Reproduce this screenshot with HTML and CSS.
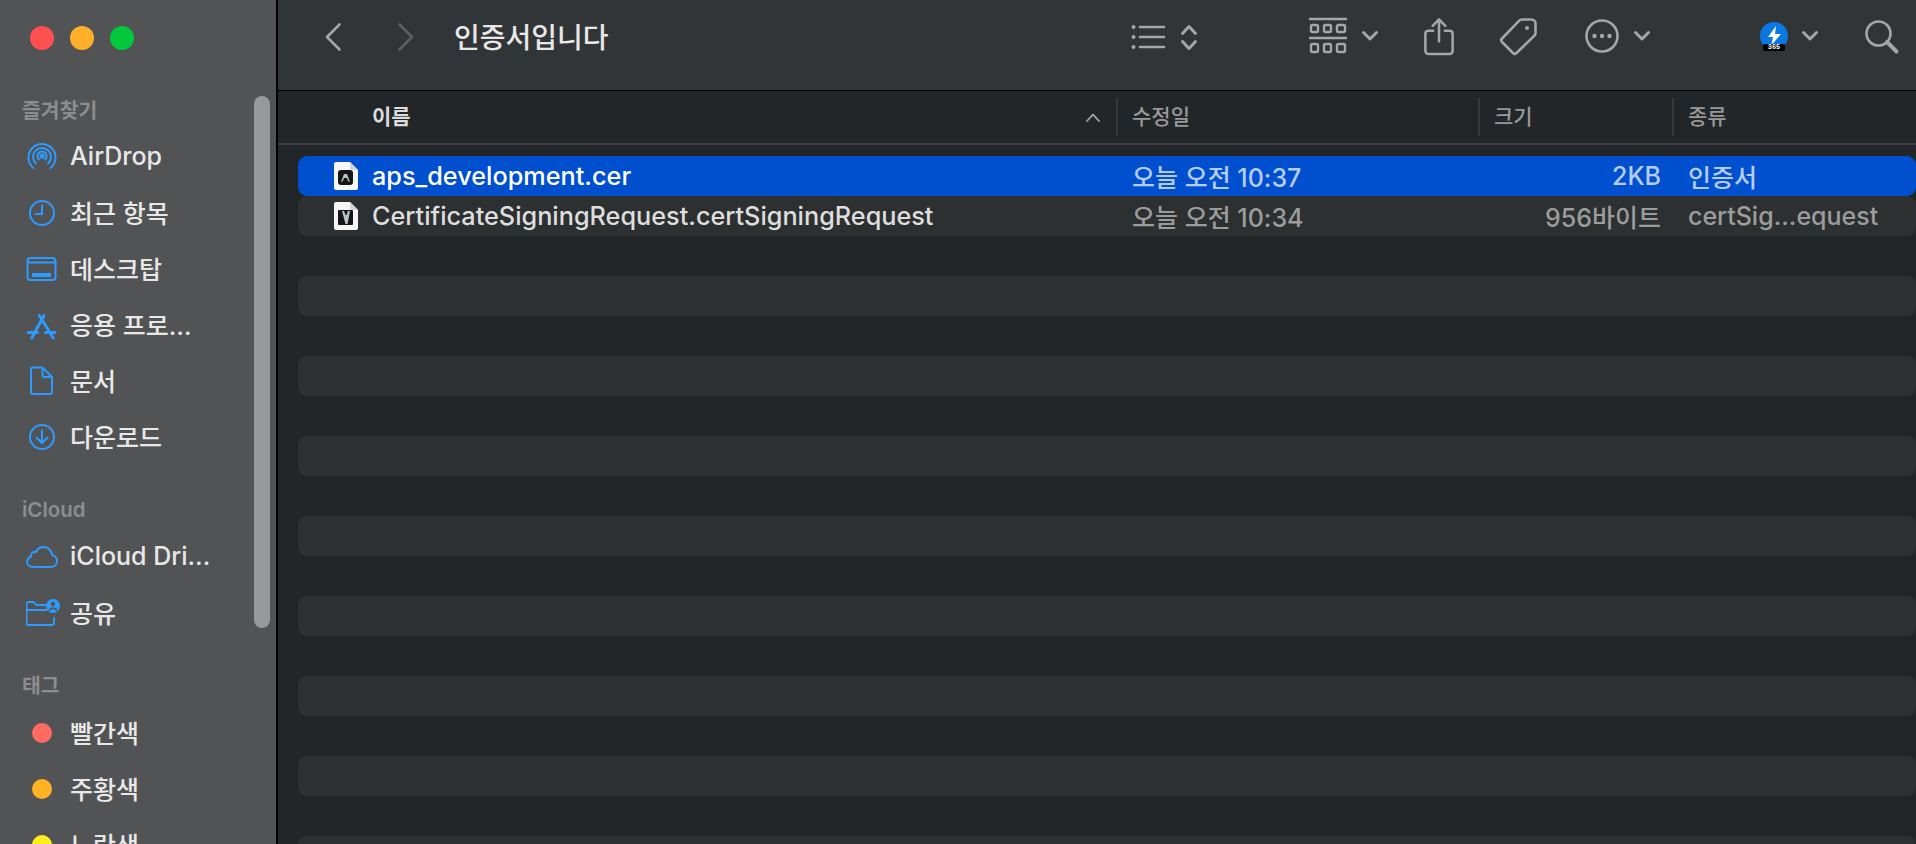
FILE: index.html
```html
<!DOCTYPE html>
<html lang="ko">
<head>
<meta charset="utf-8">
<title>인증서입니다</title>
<link rel="stylesheet" href="styles.css">
</head>
<body>
<div class="window">
  <aside class="sidebar">
    <div class="lights"><span class="light red"></span><span class="light yellow"></span><span class="light green"></span></div>
    <h2 class="section first">즐겨찾기</h2>
    <div class="item"><svg class="sicon" viewBox="0 0 32 32"><path d="M7.500 27a13.500 13.500 0 1 1 17 0M10 22.600a9 9 0 1 1 12 0M13 18.600a4.600 4.600 0 1 1 6 0"/><circle class="fill" cx="16" cy="15" r="1.600"/></svg><span>AirDrop</span></div>
    <div class="item"><svg class="sicon" viewBox="0 0 32 32"><circle cx="16" cy="16" r="12"/><path d="M16 8.500V17H9.500"/></svg><span>최근 항목</span></div>
    <div class="item"><svg class="sicon" viewBox="0 0 32 32"><rect x="1.500" y="5" width="28" height="22" rx="3"/><path d="M1.500 9.500h28"/><rect class="fill nostroke" x="6" y="20" width="19" height="4"/></svg><span>데스크탑</span></div>
    <div class="item"><svg class="sicon" viewBox="0 0 32 32"><path class="thick" d="M13.300 6.500L27.300 29M18 6.500L5.700 29M2.300 23.500h9M19.500 23.500H29"/></svg><span>응용 프로…</span></div>
    <div class="item"><svg class="sicon" viewBox="0 0 32 32"><path d="M7 2.500h9.500L26 12v15a2 2 0 0 1-2 2H7a2 2 0 0 1-2-2V4.500a2 2 0 0 1 2-2zM16.500 2.500V10a2 2 0 0 0 2 2H26"/></svg><span>문서</span></div>
    <div class="item"><svg class="sicon" viewBox="0 0 32 32"><circle cx="16" cy="16" r="12"/><path d="M16 9.500V22M10.500 16.500l5.500 5.500 5.500-5.500"/></svg><span>다운로드</span></div>
    <h2 class="section">iCloud</h2>
    <div class="item"><svg class="sicon" viewBox="0 0 32 32"><path d="M8 26h17a6 6 0 0 0 1.500-11.800C25.500 9 21.500 6 17.500 6c-3.500 0-6 2-7.500 5-1-.4-3-.3-4 1-.9 1.100-1 2.400-1 3.500C3 16.500 1 18.800 1 21c0 3 3 5 7 5z"/></svg><span>iCloud Dri...</span></div>
    <div class="item"><svg class="sicon wide" viewBox="0 0 34 32"><path d="M28 21v5a2 2 0 0 1-2 2H2.500a2 2 0 0 1-2-2V7a2 2 0 0 1 2-2h5l3 3h9M.5 13h20"/><circle class="fill nostroke" cx="27" cy="9" r="7"/><circle class="cut" cx="27" cy="7" r="2.200"/><path class="cutline" d="M23.500 13c1-2.500 6-2.500 7 0"/></svg><span>공유</span></div>
    <h2 class="section">태그</h2>
    <div class="item"><span class="tag tag-red"></span><span>빨간색</span></div>
    <div class="item"><span class="tag tag-orange"></span><span>주황색</span></div>
    <div class="item"><span class="tag tag-yellow"></span><span>노란색</span></div>
    <div class="scrollbar"></div>
  </aside>

  <main class="main">
    <header class="toolbar">
      <svg class="tb nav" viewBox="0 0 16 28"><path d="M14.500 1.500L2 14l12.500 12.500"/></svg>
      <svg class="tb nav forward" viewBox="0 0 16 28"><path d="M1.500 1.500L14 14 1.500 26.500"/></svg>
      <h1 class="title">인증서입니다</h1>
      <svg class="tb list" viewBox="0 0 34 24"><circle class="dot" cx="2.500" cy="2" r="2"/><circle class="dot" cx="2.500" cy="12" r="2"/><circle class="dot" cx="2.500" cy="22" r="2"/><path d="M9 2h24M9 12h24M9 22h24"/></svg>
      <svg class="tb updown" viewBox="0 0 16 27"><path d="M1.500 9.500L8 2.500l6.500 7M1.500 17.500L8 24.500l6.500-7"/></svg>
      <svg class="tb grid" viewBox="0 0 36 36"><path d="M0 1h36M0 20h36"/><rect x="1" y="7" width="7" height="7" rx="1.500"/><rect x="14" y="7" width="7" height="7" rx="1.500"/><rect x="27" y="7" width="8" height="7" rx="1.500"/><rect x="1" y="26" width="7" height="8" rx="1.500"/><rect x="14" y="26" width="7" height="8" rx="1.500"/><rect x="27" y="26" width="8" height="8" rx="1.500"/></svg>
      <svg class="tb chev chev-grid" viewBox="0 0 16 10"><path d="M1.500 1.500L8 8l6.500-6.500"/></svg>
      <svg class="tb share" viewBox="0 0 30 38"><path d="M9 13H4a3 3 0 0 0-3 3v18a3 3 0 0 0 3 3h22a3 3 0 0 0 3-3V16a3 3 0 0 0-3-3h-5M15 24V2M8.500 8L15 1.500 21.500 8"/></svg>
      <svg class="tb tagicon" viewBox="0 0 37 37"><path d="M22 1.500h9.500a4 4 0 0 1 4 4V15a4 4 0 0 1-1.200 2.800L16.500 35a2.500 2.500 0 0 1-3.500 0L2 24a2.500 2.500 0 0 1 0-3.500L19 2.800A4 4 0 0 1 22 1.500z"/><circle class="dot" cx="27" cy="10" r="2"/></svg>
      <svg class="tb more" viewBox="0 0 34 34"><circle cx="17" cy="17" r="15.500"/><circle class="dot" cx="9.500" cy="17" r="2.200"/><circle class="dot" cx="17" cy="17" r="2.200"/><circle class="dot" cx="24.500" cy="17" r="2.200"/></svg>
      <svg class="tb chev chev-more" viewBox="0 0 16 10"><path d="M1.500 1.500L8 8l6.500-6.500"/></svg>
      <div class="amp"><svg class="amp-svg" viewBox="0 0 28 28"><circle class="amp-circle" cx="14" cy="14" r="14"/><path class="amp-bolt" d="M16 4L8 15h5l-1.500 8L21 12h-6z"/></svg><span class="amp-label">365</span></div>
      <svg class="tb chev chev-amp" viewBox="0 0 16 10"><path d="M1.500 1.500L8 8l6.500-6.500"/></svg>
      <svg class="tb search" viewBox="0 0 33 33"><circle cx="13.500" cy="13.500" r="12"/><path class="thick" d="M22 22l9.500 9.500"/></svg>
    </header>

    <div class="colhead">
      <div class="col col-name"><span>이름</span><svg class="sort" viewBox="0 0 14 9"><path d="M1 8l6-6.500L13 8"/></svg></div>
      <div class="col col-other">수정일</div>
      <div class="col col-other">크기</div>
      <div class="col col-other">종류</div>
    </div>

    <div class="rows">
      <div class="row selected">
        <div class="cell-name">
          <svg class="fileicon" viewBox="0 0 24 28"><path class="paper" d="M2 0h14l8 8v18a2 2 0 0 1-2 2H2a2 2 0 0 1-2-2V2a2 2 0 0 1 2-2z"/><path class="fold" d="M16 0v6a2 2 0 0 0 2 2h6z"/><rect class="badge" x="4" y="8" width="15" height="15" rx="3"/><path class="seal" d="M7 20l3-8h3l3 8-2-1-1-3h-3l-1 3z"/></svg>
          <span class="name-text">aps_development.cer</span>
        </div>
        <div class="cell-dim">오늘 오전 10:37</div>
        <div class="cell-dim cell-size">2KB</div>
        <div class="cell-dim cell-kind">인증서</div>
      </div>
      <div class="row alt">
        <div class="cell-name">
          <svg class="fileicon" viewBox="0 0 24 28"><path class="paper" d="M2 0h14l8 8v18a2 2 0 0 1-2 2H2a2 2 0 0 1-2-2V2a2 2 0 0 1 2-2z"/><path class="fold" d="M16 0v6a2 2 0 0 0 2 2h6z"/><rect class="badge" x="4" y="8" width="15" height="15" rx="1"/><path class="seal" d="M8 9h2l1.500 4h1L14 9h2l-2.500 13h-2z"/></svg>
          <span class="name-text name-dim">CertificateSigningRequest.certSigningRequest</span>
        </div>
        <div class="cell-dim">오늘 오전 10:34</div>
        <div class="cell-dim cell-size">956바이트</div>
        <div class="cell-dim cell-kind">certSig...equest</div>
      </div>
      <div class="row"></div><div class="row alt"></div>
      <div class="row"></div><div class="row alt"></div>
      <div class="row"></div><div class="row alt"></div>
      <div class="row"></div><div class="row alt"></div>
      <div class="row"></div><div class="row alt"></div>
      <div class="row"></div><div class="row alt"></div>
      <div class="row"></div><div class="row alt"></div>
      <div class="row"></div><div class="row alt"></div>
    </div>
  </main>
</div>
</body>
</html>
```

FILE: styles.css
```css
* { box-sizing: border-box; }
html, body { margin: 0; height: 100%; overflow: hidden; background: #232628; }
body { font-family: Inter, "Noto Sans CJK KR", "Noto Sans", sans-serif; color: #e6e6e6; }
h1, h2 { margin: 0; }
svg { display: block; flex: none; }

.window { display: flex; width: 1916px; height: 844px; overflow: hidden; }

/* Sidebar */
.sidebar { position: relative; flex: none; width: 276px; height: 844px; background: #525355; overflow: hidden; }
.lights { display: flex; gap: 16px; padding: 26px 0 0 30px; height: 50px; }
.light { width: 24px; height: 24px; border-radius: 50%; }
.red { background: #ff5050; }
.yellow { background: #ffb02a; }
.green { background: #00c83a; }

.section { height: 28px; line-height: 28px; margin: 31px 0 5px 22px; font-size: 20.500px; font-weight: 600; color: #8c8d8f; }
.section.first { margin-top: 47px; margin-bottom: 4px; }

.item { display: flex; align-items: center; gap: 12px; height: 56px; padding: 0 0 2px 26px; font-size: 25px; font-weight: 450; color: #e8e8e8; white-space: nowrap; }
.sicon { width: 32px; height: 32px; margin-top: 2px; fill: none; stroke: #2d9bff; stroke-width: 2; stroke-linecap: round; stroke-linejoin: round; }
.sicon.wide { width: 34px; margin-right: -2px; }
.sicon .fill { fill: #2d9bff; }
.sicon .nostroke { stroke: none; }
.sicon .thick { stroke-width: 3; }
.sicon .cut { fill: #525355; stroke: none; }
.sicon .cutline { stroke: #525355; stroke-width: 2; }
.tag { width: 20px; height: 20px; margin: 2px 6px 0 6px; border-radius: 50%; }
.tag-red { background: #ff6b63; }
.tag-orange { background: #ffb224; }
.tag-yellow { background: #ffee1f; }
.scrollbar { position: absolute; left: 254px; top: 96px; width: 16px; height: 532px; border-radius: 8px; background: #98999b; }

/* Main */
.main { flex: 1; min-width: 0; border-left: 2px solid #000; background: #232628; }
.toolbar { position: relative; display: flex; align-items: center; height: 91px; background: #323537; border-bottom: 1px solid #000; }
.tb { fill: none; stroke: #a4a6a7; stroke-width: 2.600; stroke-linecap: round; stroke-linejoin: round; overflow: visible; }
.tb .dot { fill: #a4a6a7; stroke: none; }
.tb .thick { stroke-width: 4; }
.nav { width: 16px; height: 28px; margin-left: 47px; margin-top: -16px; }
.forward { margin-left: 57px; stroke: #5c5f60; }
.title { margin: -18px 0 0 40px; width: 677px; font-size: 28px; font-weight: 500; color: #e8e8e8; white-space: nowrap; }
.list { width: 34px; height: 24px; margin-top: -16px; stroke-width: 2.600; }
.updown { width: 16px; height: 27px; margin: -16px 0 0 16px; stroke-width: 3; }
.grid { width: 36px; height: 36px; margin: -18px 0 0 113px; stroke-width: 2.400; }
.chev { width: 16px; height: 10px; margin-top: -18px; stroke-width: 3; }
.chev-grid { margin-left: 16px; }
.share { width: 30px; height: 37px; margin: -18px 0 0 46px; }
.tagicon { width: 37px; height: 37px; margin: -18px 0 0 46px; }
.more { width: 34px; height: 34px; margin: -18px 0 0 48px; }
.chev-more { margin-left: 15px; }
.amp { position: relative; width: 28px; height: 30px; margin: -16px 0 0 110px; }
.amp-svg { width: 28px; height: 28px; }
.amp-circle { fill: #0a78e0; }
.amp-bolt { fill: #fff; }
.amp-label { position: absolute; left: 3px; top: 22px; width: 22px; height: 7px; border-radius: 2px; background: #000; color: #fff; font: 700 7px/7px "Liberation Mono", monospace; text-align: center; }
.chev-amp { margin-left: 14px; }
.search { width: 33px; height: 33px; margin: -18px 0 0 47px; stroke-width: 2.600; }

/* Column header */
.colhead { display: grid; grid-template-columns: 838px 362px 194px 1fr; align-items: center; height: 54px; border-bottom: 2px solid #3b3e40; font-size: 21px; }
.col { display: flex; align-items: center; height: 38px; padding-bottom: 4px; }
.col-name { justify-content: space-between; padding-right: 16px; padding-left: 94px; font-weight: 600; color: #dcdcdc; }
.col-other { padding-left: 14px; border-left: 2px solid #36393b; font-weight: 500; color: #979899; }
.sort { width: 14px; height: 9px; margin-top: 4px; fill: none; stroke: #a4a6a7; stroke-width: 1.800; stroke-linecap: round; stroke-linejoin: round; }

/* Rows */
.rows { padding: 11px 0 0 20px; font-size: 25px; font-weight: 450; }
.row { display: grid; grid-template-columns: 834px 348px 181px 1fr; align-items: center; height: 40px; border-radius: 9px; white-space: nowrap; }
.alt { background: #2d3031; }
.selected { background: #004fcf; color: #fff; }
.cell-name { display: flex; align-items: center; gap: 14px; padding-left: 36px; }
.name-text { font-size: 25.250px; }
.name-dim { color: #dedede; }
.cell-dim { color: #9b9c9d; }
.selected .cell-dim { color: #b5ccf5; }
.cell-size { text-align: right; }
.cell-kind { padding-left: 27px; }
.fileicon { width: 24px; height: 28px; }
.paper { fill: #f6f6f6; }
.fold { fill: #d4d4d4; }
.badge { fill: #161616; }
.seal { fill: #b6c4c8; }
```
